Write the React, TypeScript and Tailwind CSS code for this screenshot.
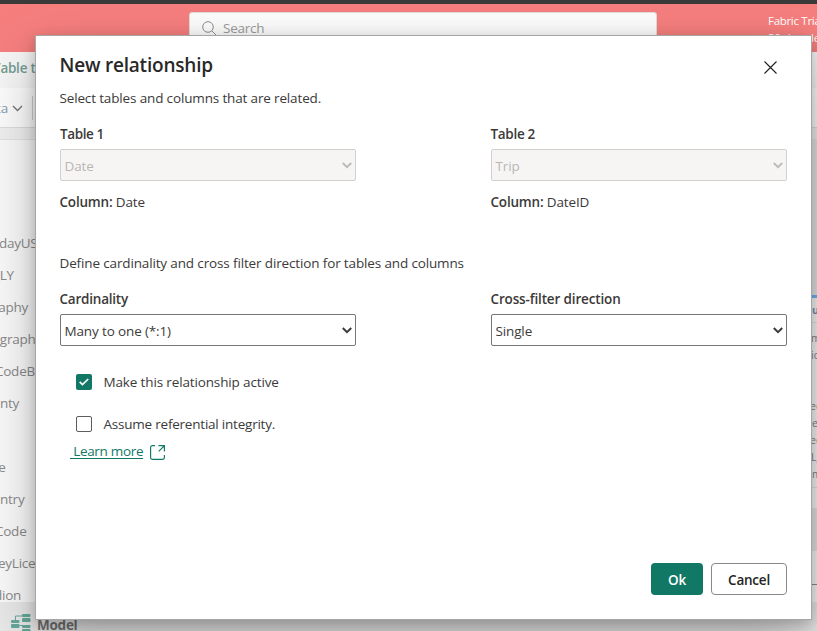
import React from 'react';

const fields = [
  { name: 'dayUSD', indent: '-ml-px' },
  { name: '_LY', indent: '-ml-[6px]' },
  { name: 'raphy', indent: '-ml-[7px]' },
  { name: 'ograph', indent: '-ml-[8px]' },
  { name: 'CodeB', indent: '-ml-[5px]' },
  { name: 'unty', indent: '-ml-[8px]' },
  { name: '', indent: '' },
  { name: 'le', indent: '-ml-[5px]' },
  { name: 'untry', indent: '-ml-[8px]' },
  { name: 'Code', indent: '-ml-[5px]' },
  { name: 'eyLice', indent: '-ml-[2px]' },
  { name: 'dion', indent: '-ml-[6px]' },
];
const cardRows = [
  { text: 'ed', indent: '-ml-px' },
  { text: 'e', indent: 'ml-px' },
  { text: 'ed', indent: '-ml-px' },
  { text: 'L_', indent: 'ml-0' },
  { text: 'm', indent: 'ml-px' },
];

function Chevron({ className }: { className: string }) {
  return (
    <svg className={className} width="10" height="7" viewBox="0 0 10 7" fill="none" stroke="currentColor" strokeWidth="2">
      <path d="M0.8 1 5 5.1 9.2 1" />
    </svg>
  );
}

function Select({ value, disabled }: { value: string; disabled?: boolean }) {
  return (
    <div
      className={
        disabled
          ? 'flex h-8 w-[296px] items-center justify-between rounded-[2px] border border-[#d2d0ce] bg-[#f6f5f4] pr-[3px] pl-[3.5px] text-[#b9b7b5]'
          : 'flex h-8 w-[296px] items-center justify-between rounded-[2px] border border-[#767676] bg-white pr-[3px] pl-[3.5px] text-[#3b3a39]'
      }
    >
      <span className="pt-0.5">{value}</span>
      <Chevron className={disabled ? 'text-[#bdbbb9]' : 'text-[#3b3a39]'} />
    </div>
  );
}

function Backdrop() {
  return (
    <div className="flex h-[631px] w-full flex-col bg-[#ececec]">
      <div className="h-1 bg-[#3a3a3a]" />
      <header className="flex h-12 justify-between bg-[#f67f7e]">
        <div className="mt-2 ml-[189px] flex h-8 w-[468px] items-center gap-[6px] rounded-[3px] border border-[#e1dfdd] bg-[#fdfdfd] pl-3 text-[13.5px] text-[#9b9b9b]">
          <svg width="15" height="15" viewBox="0 0 15 15" fill="none" stroke="#8e8e8e">
            <circle cx="6" cy="6" r="5.3" />
            <path d="m10 10 4.5 4.5" />
          </svg>
          <span className="tracking-[-0.25px]">Search</span>
        </div>
        <div className="w-[49px] overflow-hidden pt-[9px] text-[11.5px] leading-4 whitespace-nowrap text-white">
          <div className="tracking-[-0.3px]">Fabric Trial:</div>
          <div className="pt-px tracking-[-0.1px]">59 days left</div>
        </div>
      </header>
      <div className="h-9 overflow-hidden bg-[#f7f7f7] pt-[6px] text-[13.5px] leading-[20px] font-semibold whitespace-nowrap text-[#759d94]">
        <span className="-ml-[7px] tracking-[-0.25px]">Table tools</span>
      </div>
      <div className="flex h-10 items-center gap-[5px] border-b border-[#dfdfdf] bg-[#fefefe] text-[13.5px] text-[#899fb2]">
        <span className="mt-px -ml-[4px] w-[11px]">ta</span>
        <svg className="mt-px" width="11" height="7" viewBox="0 0 11 7" fill="none" stroke="#747474" strokeWidth="1.3">
          <path d="m1 1 4.5 4.5L10 1" />
        </svg>
        <div className="ml-[4px] h-6 w-px bg-[#d2d2d2]" />
      </div>
      <div className="h-[11px] shrink-0 bg-[#f2f2f2]" />
      <main className="flex h-[463px] justify-between">
        <aside className="w-[400px] border-t border-[#e5e5e5] bg-[#fcfcfc] pt-[87px] text-[13.5px] text-[#8b8b8b]">
          {fields.map((field, i) => (
            <div key={i} className="flex h-8 w-9 items-center whitespace-nowrap tracking-[-0.25px]">
              <span className={field.indent}>{field.name}</span>
            </div>
          ))}
        </aside>
        <section className="flex w-[417px] flex-col bg-[#e8e8e8] pt-[156px]">
          <div className="h-[213px] shrink-0 border-t-[3px] border-[#70b6fa] bg-[#fafafa] pl-[411px] text-[10.5px] text-[#858585]">
            <div className="-ml-[411px] h-[25px] border-b border-[#e6e6e6] pt-[4px] pl-[412px] leading-4 font-bold text-[#7992aa]">u</div>
            <div className="pt-[7px] leading-[17px]">m</div>
            <div className="leading-[17px]">ic</div>
            <div className="pt-[34px]">
              {cardRows.map((row, i) => (
                <div key={i} className="h-[17px] leading-[17px]">
                  <span className={row.indent}>{row.text}</span>
                </div>
              ))}
            </div>
            <div className="mt-1 border-t border-[#e6e6e6]" />
          </div>
          <div className="h-[43px] shrink-0" />
          <div className="h-[34px] shrink-0 border-b border-[#8b8b8b] bg-[#fafafa]" />
          <div className="grow bg-[#fafafa]" />
        </section>
      </main>
      <footer className="flex h-[29px] gap-[6px] overflow-hidden bg-[#ebebeb] pt-[11px] pl-[11px] text-[#737373]">
        <svg className="shrink-0" width="20" height="18" viewBox="0 0 20 18" fill="#67aa9d">
          <path d="M4.5 9V3h7M8.5 12.5h4" fill="none" stroke="#67aa9d" />
          <rect x="11" y="1" width="8.5" height="3" rx="1" />
          <rect x="11" y="5" width="8.5" height="4" rx="1" />
          <rect x="0" y="7" width="8.5" height="3" rx="1" />
          <rect x="0" y="11" width="8.5" height="4" rx="1" />
          <rect x="11" y="12" width="8.5" height="3" rx="1" />
          <rect x="11" y="16" width="8.5" height="4" rx="1" />
        </svg>
        <span className="text-[13.5px] leading-6 font-bold tracking-[-0.25px]">Model</span>
      </footer>
    </div>
  );
}

function Dialog() {
  return (
    <div className="absolute top-[35px] left-[35px] flex h-[585px] w-[777px] flex-col border border-[#a6a6a6] bg-white pr-[23px] pl-6 text-[13.5px] leading-5 tracking-[-0.14px] whitespace-nowrap text-[#3b3a39] shadow-[0_25px_58px_rgba(0,0,0,0.26),0_5px_14px_rgba(0,0,0,0.22)]">
      <div className="flex h-[52px] justify-between">
        <h1 className="mt-[15px] -ml-[0.5px] text-[19px] leading-7 font-semibold tracking-[-0.2px] text-[#292827]">New relationship</h1>
        <svg className="mt-[25px] mr-[11px]" width="13" height="13" viewBox="0 0 13 13" fill="none" stroke="#201f1e" strokeWidth="1.1">
          <path d="m.5.5 12 12M12.5.5l-12 12" />
        </svg>
      </div>
      <p className="-ml-[0.5px] tracking-[-0.15px]">Select tables and columns that are related.</p>
      <div className="mt-4 flex justify-between">
        <div>
          <div className="mb-[5px] font-semibold tracking-[-0.4px]">Table 1</div>
          <Select value="Date" disabled />
          <div className="mt-[11px] -ml-[0.5px]"><b className="font-semibold tracking-[-0.2px]">Column:</b> Date</div>
        </div>
        <div className="mr-px">
          <div className="mb-[5px] -ml-[0.5px] font-semibold tracking-[-0.3px]">Table 2</div>
          <Select value="Trip" disabled />
          <div className="mt-[11px] -ml-[0.5px]"><b className="font-semibold tracking-[-0.2px]">Column:</b> DateID</div>
        </div>
      </div>
      <p className="mt-[41px] -ml-[0.5px]">Define cardinality and cross filter direction for tables and columns</p>
      <div className="mt-4 flex justify-between">
        <div>
          <div className="mb-[5px] -ml-[0.5px] font-semibold tracking-[-0.22px]">Cardinality</div>
          <Select value="Many to one (*:1)" />
        </div>
        <div className="mr-px">
          <div className="mb-[5px] -ml-[0.5px] font-semibold tracking-[-0.15px]">Cross-filter direction</div>
          <Select value="Single" />
        </div>
      </div>
      <label className="mt-[26px] ml-4 flex items-center gap-[11.5px]">
        <span className="flex size-4 items-center justify-center rounded-[2px] bg-[#117865]">
          <svg width="10" height="8" viewBox="0 0 10 8" fill="none" stroke="white" strokeWidth="1.7">
            <path d="m.7 3.8 2.8 2.8L9.2 1" />
          </svg>
        </span>
        <span>Make this relationship active</span>
      </label>
      <label className="mt-[22px] ml-4 flex items-center gap-[11.5px]">
        <span className="size-4 rounded-[2px] border border-[#605e5c]" />
        <span className="tracking-[-0.22px]">Assume referential integrity.</span>
      </label>
      <div className="mt-[7px] ml-[10px] flex items-center gap-[7px] text-[#117865]">
        <a className="tracking-[-0.32px] whitespace-pre underline underline-offset-2"> Learn more</a>
        <svg className="mt-[3px]" width="15" height="15" viewBox="0 0 15 15" fill="none" stroke="currentColor" strokeWidth="1.15">
          <path d="M5 .6H2.5A1.9 1.9 0 0 0 .6 2.5v10a1.9 1.9 0 0 0 1.9 1.9h10a1.9 1.9 0 0 0 1.9-1.9V10M8.5.6h5.9v5.9M14.2.8 8.7 6.3" />
        </svg>
      </div>
      <div className="mt-auto mr-px mb-6 flex justify-end gap-2 font-semibold tracking-[-0.22px]">
        <button className="h-8 w-[52px] rounded-[4px] bg-[#117865] pt-0.5 text-white">Ok</button>
        <button className="h-8 w-[76px] rounded-[4px] border border-[#8a8886] bg-white pt-0.5 text-[#242424]">Cancel</button>
      </div>
    </div>
  );
}

export default function App() {
  return (
    <div className="relative h-[631px] w-[817px] overflow-hidden font-['Open_Sans','Noto_Sans',sans-serif]">
      <Backdrop />
      <Dialog />
    </div>
  );
}
